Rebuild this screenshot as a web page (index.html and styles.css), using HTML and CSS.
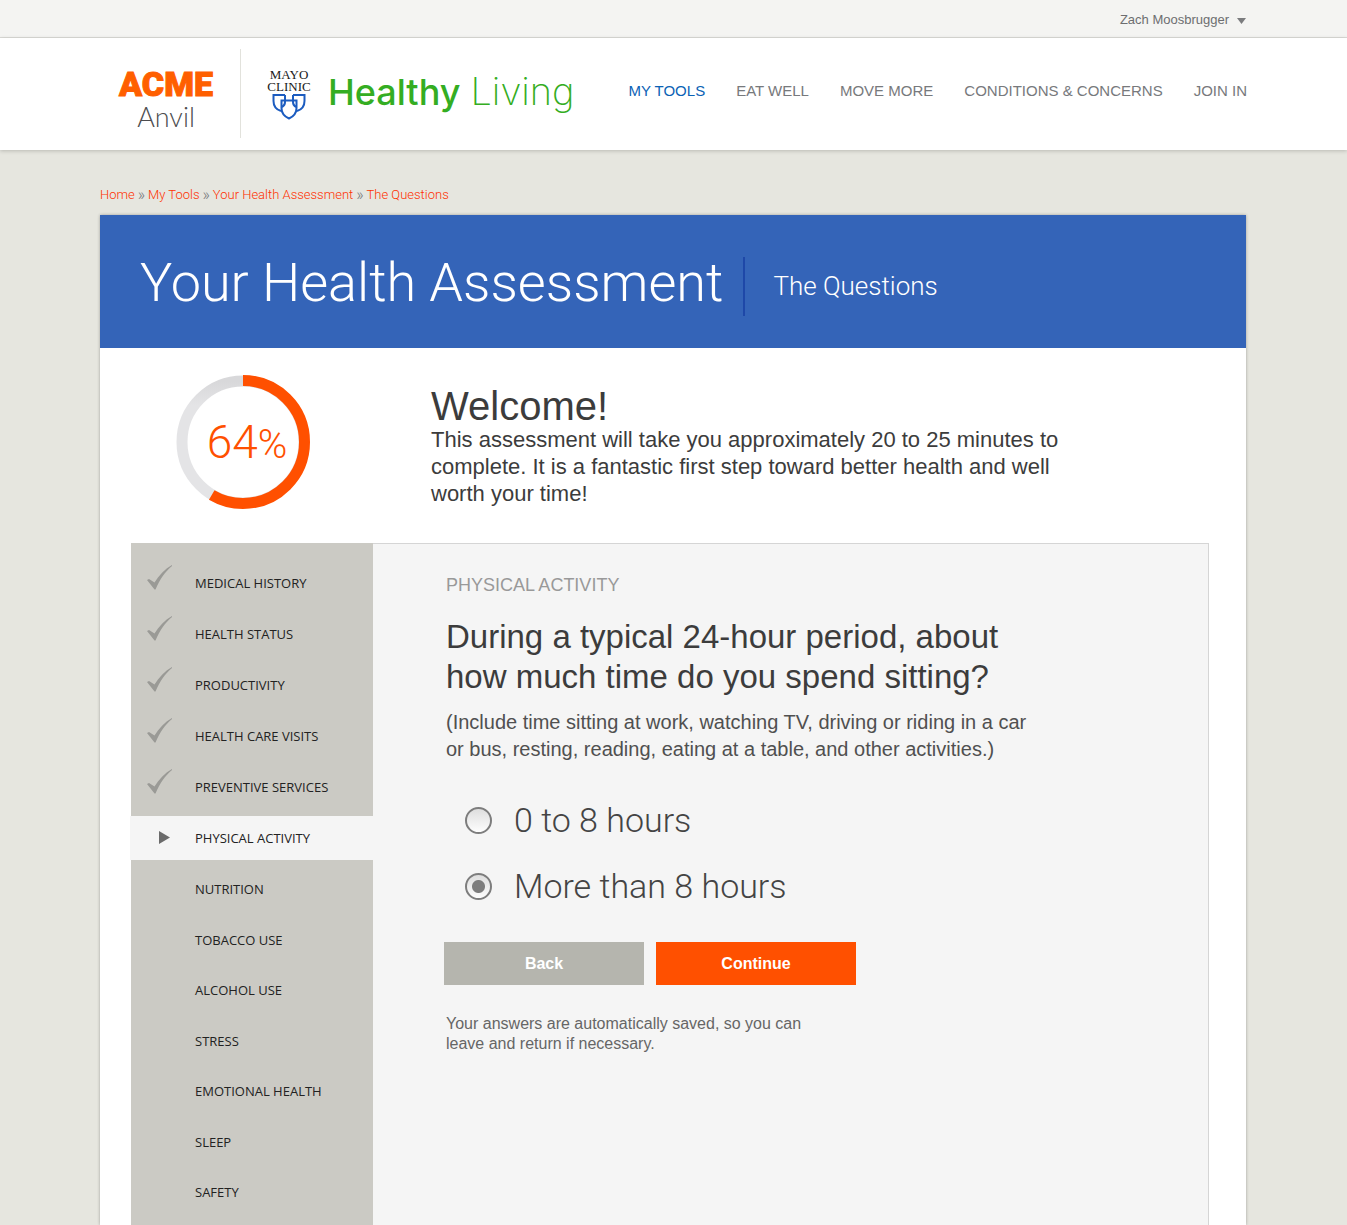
FILE: index.html
```html
<!DOCTYPE html>
<html lang="en">
<head>
<meta charset="utf-8">
<meta name="viewport" content="width=device-width, initial-scale=1">
<title>Your Health Assessment</title>
<link rel="stylesheet" href="styles.css">
</head>
<body>
<svg class="sprite" aria-hidden="true">
  <symbol id="check" viewBox="0 0 25 25"><path d="M0 15 2 14 7.500 17.500C12 10 18 4 25 0V1C18 7 13 14 8.500 24.500H7.500Z"/></symbol>
</svg>
<div class="topbar">
  <button class="user" type="button">Zach Moosbrugger
    <svg class="caret" viewBox="0 0 9 6" aria-hidden="true"><path d="M0 0h9L4.500 6z"/></svg>
  </button>
</div>
<header class="header">
  <div class="logo-acme"><span class="acme">ACME</span><span class="anvil">Anvil</span></div>
  <div class="logo-mayo">
    <div class="mayo-name">MAYO<br>CLINIC</div>
    <svg class="shields" viewBox="0 0 34 26" aria-hidden="true">
      <path d="M13 1H1.500V7c0 5 2.500 8.500 7.500 10M13 1V8c0 2-1 4-3 5M21 1H32.500V7c0 5-2.500 8.500-7.500 10M21 1V8c0 2 1 4 3 5"/>
      <path d="M9.500 6.500h15V14c0 5-3 8.500-7.500 10.500C12.500 22.500 9.500 19 9.500 14z"/>
    </svg>
  </div>
  <div class="brand"><span class="brand-healthy">Healthy</span> <span class="brand-living">Living</span></div>
  <nav class="nav">
    <a class="current" href="#">MY TOOLS</a>
    <a href="#">EAT WELL</a>
    <a href="#">MOVE MORE</a>
    <a href="#">CONDITIONS &amp; CONCERNS</a>
    <a href="#">JOIN IN</a>
  </nav>
</header>
<main class="page">
  <nav class="crumbs">
    <a href="#">Home</a><span>»</span><a href="#">My Tools</a><span>»</span><a href="#">Your Health Assessment</a><span>»</span><a href="#">The Questions</a>
  </nav>
  <div class="card">
    <div class="banner">
      <h1>Your Health Assessment</h1>
      <p>The Questions</p>
    </div>
    <section class="intro">
      <div class="progress">
        <svg viewBox="0 0 134 134" aria-hidden="true">
          <defs><linearGradient id="track" x1="0" y1="0" x2="0" y2="1"><stop offset="0" stop-color="#d8d8da"/><stop offset=".2" stop-color="#e4e4e6"/></linearGradient></defs>
          <circle cx="67" cy="67" r="61" fill="none" stroke="url(#track)" stroke-width="11"/>
          <circle cx="67" cy="67" r="61.500" fill="none" stroke="#ff5000" stroke-width="11" pathLength="100" stroke-dasharray="58.500 100" transform="rotate(-90 67 67)"/>
        </svg>
        <div class="percent">64<span>%</span></div>
      </div>
      <div class="welcome">
        <h2>Welcome!</h2>
        <p>This assessment will take you approximately 20 to 25 minutes to complete. It is a fantastic first step toward better health and well worth your time!</p>
      </div>
    </section>
    <div class="assessment">
      <ul class="steps">
        <li><a href="#"><svg class="mark"><use href="#check"/></svg>MEDICAL HISTORY</a></li>
        <li><a href="#"><svg class="mark"><use href="#check"/></svg>HEALTH STATUS</a></li>
        <li><a href="#"><svg class="mark"><use href="#check"/></svg>PRODUCTIVITY</a></li>
        <li><a href="#"><svg class="mark"><use href="#check"/></svg>HEALTH CARE VISITS</a></li>
        <li><a href="#"><svg class="mark"><use href="#check"/></svg>PREVENTIVE SERVICES</a></li>
        <li class="active"><a href="#"><svg class="arrow" viewBox="0 0 11 13" aria-hidden="true"><path d="M0 0 11 6.500 0 13z"/></svg>PHYSICAL ACTIVITY</a></li>
        <li><a href="#">NUTRITION</a></li>
        <li><a href="#">TOBACCO USE</a></li>
        <li><a href="#">ALCOHOL USE</a></li>
        <li><a href="#">STRESS</a></li>
        <li><a href="#">EMOTIONAL HEALTH</a></li>
        <li><a href="#">SLEEP</a></li>
        <li><a href="#">SAFETY</a></li>
      </ul>
      <form class="question">
        <p class="category">PHYSICAL ACTIVITY</p>
        <h3>During a typical 24-hour period, about how much time do you spend sitting?</h3>
        <p class="hint">(Include time sitting at work, watching TV, driving or riding in a car or bus, resting, reading, eating at a table, and other activities.)</p>
        <div class="options">
          <label><input type="radio" name="sitting" value="0-8">0 to 8 hours</label>
          <label><input type="radio" name="sitting" value="8+" checked>More than 8 hours</label>
        </div>
        <div class="actions">
          <button class="back" type="button">Back</button>
          <button class="continue" type="button">Continue</button>
        </div>
        <p class="note">Your answers are automatically saved, so you can leave and return if necessary.</p>
      </form>
    </div>
  </div>
</main>
</body>
</html>
```
FILE: styles.css
```css
* { box-sizing: border-box; }
body {
  margin: 0;
  min-height: 100vh;
  display: flex;
  flex-direction: column;
  background: #e6e6df;
  color: #3c3c3c;
  font-family: "Liberation Sans", Arial, sans-serif;
}
h1, h2, h3, p, ul { margin: 0; padding: 0; font-weight: 400; }
a { color: inherit; text-decoration: none; }
button { border: 0; font-family: inherit; cursor: pointer; }
.sprite { display: none; }

.topbar {
  display: flex;
  justify-content: flex-end;
  height: 38px;
  padding: 0 101px 0 100px;
  background: #f4f4f2;
  border-bottom: 1px solid #dcdcd8;
}
.user {
  display: flex;
  align-items: center;
  gap: 8px;
  padding: 2px 0 0;
  background: none;
  color: #6d6e70;
  font-size: 13px;
}
.caret { width: 9px; height: 6px; margin-top: 2px; fill: #7b7c7e; }

.header {
  display: flex;
  height: 112px;
  padding: 11px 100px 12px;
  background: #fff;
  box-shadow: 0 1px 4px rgba(0, 0, 0, .2);
}
.logo-acme {
  display: flex;
  flex-direction: column;
  align-items: center;
  width: 141px;
  padding: 16px 8px 0 0;
  border-right: 1px solid #e2e2dc;
}
.acme {
  color: #ff5f00;
  font: 900 34px/38px Roboto, sans-serif;
  -webkit-text-stroke: 1px #ff5f00;
}
.anvil { color: #4d4d4f; font: 300 27px/28px Lato, sans-serif; }
.logo-mayo {
  display: flex;
  flex-direction: column;
  align-items: center;
  width: 46px;
  margin: 20px 16px 0 25px;
}
.mayo-name {
  color: #1a1a1a;
  font: 13px/12px "Liberation Serif", serif;
  text-align: center;
}
.shields { width: 34px; height: 26px; margin-top: 1px; fill: none; stroke: #1c5cc0; stroke-width: 2; }
.brand {
  display: flex;
  align-items: baseline;
  gap: 10px;
  padding-top: 20px;
  color: #34ad22;
  font: 36px/44px Inter, sans-serif;
}
.brand-healthy { font-weight: 500; }
.brand-living { font-weight: 200; font-size: 38px; }
.nav {
  display: flex;
  gap: 31px;
  margin-left: auto;
  padding-top: 31px;
  color: #77797c;
  font-size: 15px;
  line-height: 22px;
  white-space: nowrap;
}
.nav .current { color: #0b62b5; }

.page { flex: 1; display: flex; flex-direction: column; padding: 35px 101px 0 100px; }
.crumbs {
  display: flex;
  gap: 3px;
  margin-bottom: 10px;
  color: #ff3000;
  font: 300 13px/20px Roboto, sans-serif;
}
.crumbs span { color: #77797c; font-size: 16px; }

.card {
  flex: 1;
  display: flex;
  flex-direction: column;
  background: #fff;
  box-shadow: 0 0 3px rgba(0, 0, 0, .3);
}
.banner {
  display: flex;
  align-items: center;
  padding: 42px 40px 32px;
  background: #3464b8;
  color: #fff;
  font-family: Roboto, sans-serif;
  font-weight: 300;
}
.banner h1 { padding-bottom: 8px; font-size: 54px; line-height: 51px; font-weight: 300; }
.banner p {
  margin-left: 20px;
  padding-left: 28px;
  border-left: 2px solid #1e48a8;
  font-size: 26px;
  line-height: 59px;
  font-weight: 300;
}
.intro { display: flex; padding: 27px 76px 34px; }
.progress { position: relative; flex: none; width: 134px; height: 134px; }
.progress svg { display: block; }
.percent {
  position: absolute;
  inset: 0;
  color: #ff5000;
  font: 300 46px/134px Roboto, sans-serif;
  text-align: center;
  padding-left: 8px;
}
.percent span { font-size: 40px; }
.welcome { max-width: 771px; padding: 12px 0 0 121px; }
.welcome h2 { font-size: 40px; line-height: 39px; }
.welcome p { font-size: 22px; line-height: 27px; }

.assessment { flex: 1; display: flex; padding: 0 37px 0 31px; }
.steps {
  flex: none;
  display: grid;
  align-content: start;
  grid-template-rows: repeat(6, 44px);
  grid-auto-rows: 44px 43px;
  gap: 7px;
  width: 242px;
  padding-top: 18px;
  background: #cbcac4;
  color: #222;
  font: 13px/20px "Open Sans", sans-serif;
  list-style: none;
}
.steps a {
  position: relative;
  display: flex;
  align-items: center;
  height: 100%;
  padding-left: 64px;
}
.steps .active { margin-left: -1px; padding-left: 1px; background: #f5f5f5; }
.mark, .arrow { position: absolute; }
.mark { left: 16px; top: 4px; width: 25px; height: 25px; fill: #9a9a96; }
.arrow { left: 28px; top: 15px; width: 11px; height: 13px; fill: #6b6b6b; }

.question {
  flex: 1;
  padding: 31px 73px 0;
  background: #f5f5f5;
  border: 1px solid #d5d5d5;
  border-width: 1px 1px 0 0;
}
.category { color: #999; font-size: 18px; line-height: 20px; }
.question h3 { max-width: 600px; margin-top: 22px; font-size: 33px; line-height: 40px; }
.hint { max-width: 600px; margin-top: 12px; color: #505050; font-size: 20px; line-height: 27px; }
.options { display: grid; gap: 26px; margin: 37px 0 0 19px; }
.options label {
  display: flex;
  align-items: center;
  gap: 22px;
  color: #444;
  font: 300 34px/40px Roboto, sans-serif;
}
.options input {
  appearance: none;
  width: 27px;
  height: 27px;
  margin: 0;
  border: 2px solid #7d7d7d;
  border-radius: 50%;
  background: linear-gradient(#dedede, #fdfdfd);
}
.options input:checked {
  background: radial-gradient(circle, #7d7d7d 6px, transparent 7px), linear-gradient(#dedede, #fdfdfd);
}
.actions { display: flex; gap: 12px; margin: 36px 0 0 -2px; }
.actions button { width: 200px; height: 43px; color: #fff; font-size: 16px; font-weight: 700; }
.back { background: #b5b5ae; }
.continue { background: #ff5000; }
.note { max-width: 380px; margin-top: 29px; color: #666; font-size: 16px; line-height: 20px; }
```
